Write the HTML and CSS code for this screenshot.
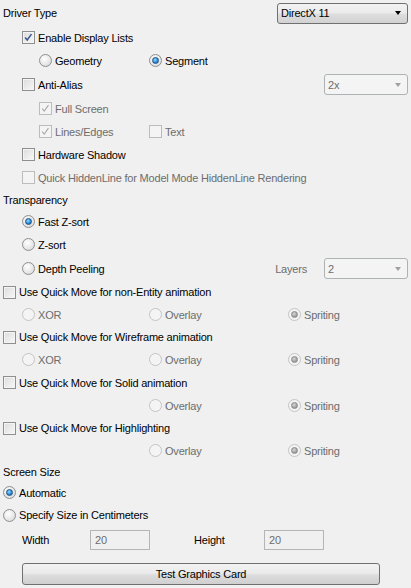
FILE: index.html
```html
<!DOCTYPE html>
<html lang="en">
  <head>
    <meta charset="UTF-8" />
    <title>Graphics Options</title>
    <link rel="stylesheet" href="styles.css">
  </head>
  <body>
    <div class="panel">
      <div class="row first">
        <span>Driver Type</span>
        <div class="sel driver"><span>DirectX 11</span><i class="arrow"></i></div>
      </div>
      <div class="row in1">
        <label class="opt"><span class="cb on"><svg viewBox="0 0 13 13"><path d="M2.5 6.5 L5 9.5 L10 2.5" /></svg></span>Enable Display Lists</label>
      </div>
      <div class="row in2">
        <label class="opt w110"><span class="rb"></span>Geometry</label>
        <label class="opt"><span class="rb on"></span>Segment</label>
      </div>
      <div class="row in1 tall">
        <label class="opt"><span class="cb"></span>Anti-Alias</label>
        <div class="sel small dis"><span>2x</span><i class="arrow"></i></div>
      </div>
      <div class="row in2 dim">
        <label class="opt"><span class="cb dis on"><svg viewBox="0 0 13 13"><path d="M2.5 6.5 L5 9.5 L10 2.5" /></svg></span>Full Screen</label>
      </div>
      <div class="row in2 dim">
        <label class="opt w110"><span class="cb dis on"><svg viewBox="0 0 13 13"><path d="M2.5 6.5 L5 9.5 L10 2.5" /></svg></span>Lines/Edges</label>
        <label class="opt"><span class="cb dis"></span>Text</label>
      </div>
      <div class="row in1">
        <label class="opt"><span class="cb"></span>Hardware Shadow</label>
      </div>
      <div class="row in1 dim">
        <label class="opt"><span class="cb dis"></span>Quick HiddenLine for Model Mode HiddenLine Rendering</label>
      </div>
      <div class="row label-row">
        <span>Transparency</span>
      </div>
      <div class="row in1">
        <label class="opt"><span class="rb on"></span>Fast Z-sort</label>
      </div>
      <div class="row in1">
        <label class="opt"><span class="rb"></span>Z-sort</label>
      </div>
      <div class="row in1 tall">
        <label class="opt"><span class="rb"></span>Depth Peeling</label>
        <div class="layers">
          <span class="dim">Layers</span>
          <div class="sel small dis"><span>2</span><i class="arrow"></i></div>
        </div>
      </div>

      <div class="row short">
        <label class="opt"><span class="cb"></span>Use Quick Move for non-Entity animation</label>
      </div>
      <div class="row in1 dim">
        <label class="opt w127"><span class="rb dis"></span>XOR</label>
        <label class="opt w139"><span class="rb dis"></span>Overlay</label>
        <label class="opt"><span class="rb dis on"></span>Spriting</label>
      </div>
      <div class="row short">
        <label class="opt"><span class="cb"></span>Use Quick Move for Wireframe animation</label>
      </div>
      <div class="row in1 dim">
        <label class="opt w127"><span class="rb dis"></span>XOR</label>
        <label class="opt w139"><span class="rb dis"></span>Overlay</label>
        <label class="opt"><span class="rb dis on"></span>Spriting</label>
      </div>
      <div class="row">
        <label class="opt"><span class="cb"></span>Use Quick Move for Solid animation</label>
      </div>
      <div class="row in1 dim">
        <span class="w127"></span>
        <label class="opt w139"><span class="rb dis"></span>Overlay</label>
        <label class="opt"><span class="rb dis on"></span>Spriting</label>
      </div>
      <div class="row short">
        <label class="opt"><span class="cb"></span>Use Quick Move for Highlighting</label>
      </div>
      <div class="row in1 dim">
        <span class="w127"></span>
        <label class="opt w139"><span class="rb dis"></span>Overlay</label>
        <label class="opt"><span class="rb dis on"></span>Spriting</label>
      </div>

      <div class="row label-row small-row">
        <span>Screen Size</span>
      </div>
      <div class="row auto-row">
        <label class="opt"><span class="rb on"></span>Automatic</label>
      </div>
      <div class="row spec-row">
        <label class="opt"><span class="rb"></span>Specify Size in Centimeters</label>
      </div>
      <div class="row in1 size-row">
        <span class="size-label">Width</span>
        <div class="field">20</div>
        <span class="size-label height-label">Height</span>
        <div class="field">20</div>
      </div>
      <button class="btn_test">Test Graphics Card</button>
    </div>
  </body>
</html>
```

FILE: styles.css
```css
body {
  margin: 0;
  background-color: #f0f0f0;
  font-family: "Liberation Sans", Arial, sans-serif;
  font-size: 11px;
  letter-spacing: -0.2px;
  color: #000;
}
.panel {
  padding: 0 3px;
}
.row {
  display: flex;
  align-items: center;
  height: 23px;
}
.row.first {
  height: 26px;
}
.row.tall {
  height: 25px;
}
.row.short {
  height: 22px;
}
.row.label-row {
  height: 21px;
}
.row.small-row {
  height: 20px;
}
.row.auto-row {
  height: 21px;
}
.row.spec-row {
  height: 24px;
}
.row.size-row {
  height: 26px;
}
.in1 {
  padding-left: 19px;
}
.in2 {
  padding-left: 36px;
}
.dim,
.dim .opt {
  color: #6d6d6d;
}
.opt {
  display: flex;
  align-items: center;
  gap: 3px;
  white-space: nowrap;
}
.w110 {
  width: 110px;
}
.w127 {
  width: 127px;
}
.w139 {
  width: 139px;
}

/* checkbox */
.cb {
  flex: none;
  width: 13px;
  height: 13px;
  box-sizing: border-box;
  border: 1px solid #8e8f8f;
  background: linear-gradient(135deg, #dcdcdc, #f8f8f8);
  box-shadow: inset 0 0 0 1px #f4f4f4;
}
.cb svg {
  display: block;
  width: 11px;
  height: 11px;
}
.cb path {
  fill: none;
  stroke: #3a5595;
  stroke-width: 1.8;
}
.cb.dis {
  border-color: #bcbcbc;
  background: #f4f4f4;
  box-shadow: none;
}
.cb.dis path {
  stroke: #a8a8a8;
  stroke-width: 1.3;
}

/* radio */
.rb {
  flex: none;
  position: relative;
  width: 13px;
  height: 13px;
  box-sizing: border-box;
  border-radius: 50%;
  border: 1px solid #8e8f8f;
  background: radial-gradient(circle at 40% 35%, #ffffff, #d4d4d4);
}
.rb.on::after {
  content: "";
  position: absolute;
  left: 2px;
  top: 2px;
  width: 7px;
  height: 7px;
  box-sizing: border-box;
  border-radius: 50%;
  border: 1px solid #1d5282;
  background: radial-gradient(circle at 40% 35%, #8fdcff, #1b7ad0 70%);
}
.rb.dis {
  border-color: #c4c4c4;
  background: #f4f4f4;
}
.rb.dis.on::after {
  border-color: #8a8a8a;
  background: radial-gradient(circle at 40% 35%, #d8d8d8, #9a9a9a 70%);
}

/* dropdowns */
.sel {
  display: flex;
  align-items: center;
  justify-content: space-between;
  box-sizing: border-box;
  height: 21px;
  margin-left: auto;
  padding: 0 6px 0 3px;
  border: 1px solid #707070;
  border-radius: 3px;
  background: linear-gradient(#f2f2f2 0%, #ebebeb 45%, #dddddd 55%, #d2d2d2 100%);
}
.sel.driver {
  width: 131px;
  height: 21px;
}
.sel.small {
  width: 84px;
}
.sel.dis {
  border-color: #adb2b5;
  background: #f4f4f4;
  color: #6d6d6d;
}
.arrow {
  width: 0;
  height: 0;
  border-left: 3.5px solid transparent;
  border-right: 3.5px solid transparent;
  border-top: 4px solid #000;
}
.sel.dis .arrow {
  border-top-color: #a0a0a0;
}
.layers {
  display: flex;
  align-items: center;
  gap: 17px;
  margin-left: auto;
}

/* screen size */
.size-label {
  width: 68px;
}
.height-label {
  width: 70px;
  margin-left: 44px;
}
.field {
  box-sizing: border-box;
  width: 60px;
  height: 20px;
  padding: 3px 0 0 4px;
  border: 1px solid #b5b5b5;
  background: #f0f0f0;
  color: #6d6d6d;
}
.btn_test {
  display: block;
  width: 358px;
  height: 22px;
  margin: 10px 0 0 19px;
  padding: 0;
  font-family: "Liberation Sans", Arial, sans-serif;
  font-size: 11px;
  letter-spacing: -0.2px;
  color: #000;
  border: 1px solid #707070;
  border-radius: 3px;
  background: linear-gradient(#f2f2f2 0%, #ebebeb 45%, #dddddd 55%, #cfcfcf 100%);
}
```
